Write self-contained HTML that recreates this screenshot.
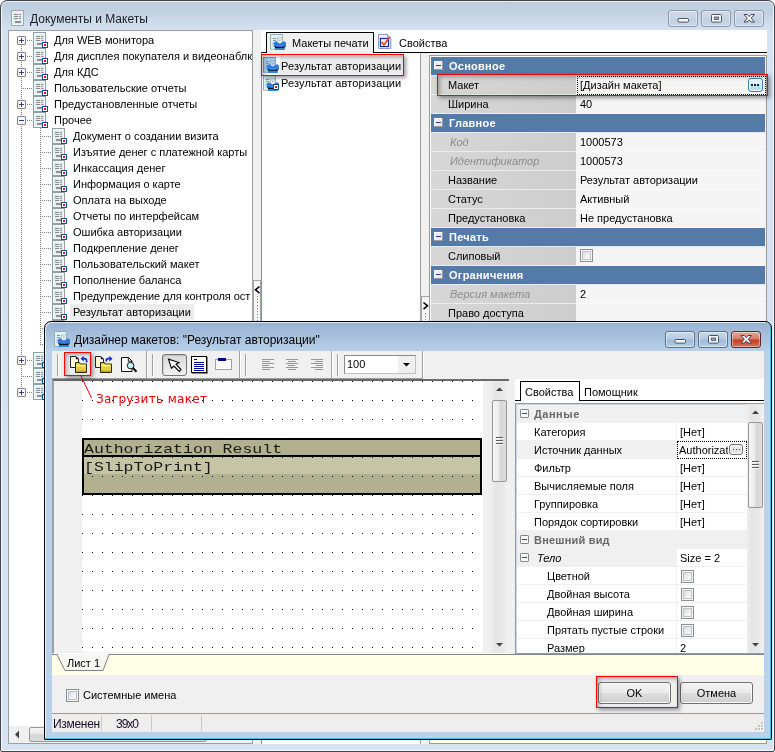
<!DOCTYPE html>
<html lang="ru"><head><meta charset="utf-8"><title>Документы и Макеты</title>
<style>
html,body{margin:0;padding:0;background:#fff;}
body{will-change:transform;width:775px;height:752px;position:relative;overflow:hidden;font:11px "Liberation Sans",sans-serif;color:#000;}
div{position:absolute;box-sizing:border-box;}
.t{white-space:nowrap;line-height:16px;height:16px;}
.tt{white-space:nowrap;line-height:16px;height:16px;font-size:12px;}
svg{position:absolute;overflow:visible;}
.rb{border:1px solid #f00;box-shadow:2px 2px 4px rgba(0,0,0,.4), inset 2px 2px 4px rgba(0,0,0,.3);}
.cb{width:13px;height:13px;border:1px solid #8e8f8f;background:linear-gradient(135deg,#cfd3d8 0%,#eef0f2 55%,#fff 100%);box-shadow:inset 0 0 0 1px #f4f4f4, inset 0 0 0 2px #bcc2c8;}
.btn{border:1px solid #707070;border-radius:3px;background:linear-gradient(#f2f2f2 0%,#ebebeb 48%,#dddddd 52%,#cfcfcf 100%);box-shadow:inset 0 0 0 1px #fcfcfc;text-align:center;line-height:20px;}
.cap{border:1px solid #8593a5;border-radius:3px;width:30px;height:17px;}
</style></head>
<body>
<div style="left:0px;top:0px;width:775px;height:752px;border:1px solid #41444a;border-radius:7px 7px 2px 2px;background:linear-gradient(180deg,#bccbdc 0px,#c4d3e4 12px,#d5e2f0 30px,#d7e3f1 100%);box-shadow:inset 0 0 0 1px rgba(255,255,255,.75);"></div>
<svg style="left:11px;top:10px" width="16" height="16" viewBox="0 0 16 16"><rect x="0" y="0" width="13" height="16" fill="#a6a6a6"/> <rect x="1" y="1" width="11" height="14" fill="#dffefe"/> <rect x="2" y="2" width="9" height="12" fill="#e6eef2"/> <rect x="3" y="4" width="4" height="1" fill="#858585"/><rect x="8" y="4" width="2" height="1" fill="#858585"/> <rect x="3" y="6" width="4" height="1" fill="#8e8e8e"/><rect x="8" y="6" width="2" height="1" fill="#8e8e8e"/> <rect x="3" y="8" width="4" height="1" fill="#8e8e8e"/><rect x="8" y="8" width="2" height="1" fill="#8e8e8e"/> <rect x="4" y="11" width="6" height="2" fill="#8f8f8f"/></svg>
<div class="tt" style="left:30px;top:11px;color:#1c1c24;">Документы и Макеты</div>
<div class="cap" style="left:668px;top:10px;width:30px;height:17px;background:linear-gradient(#cfdbea 0%,#c8d5e6 48%,#bfcee2 52%,#c8d6e8 100%);border-color:#8a99ad;box-shadow:inset 0 0 0 1px rgba(255,255,255,.45);"><svg style="left:-1px;top:-1px" width="30" height="17"><rect x="10" y="8.5" width="10.5" height="3.6" rx="1" fill="#f6f7f9" stroke="#4a5565"/></svg></div>
<div class="cap" style="left:701px;top:10px;width:30px;height:17px;background:linear-gradient(#cfdbea 0%,#c8d5e6 48%,#bfcee2 52%,#c8d6e8 100%);border-color:#8a99ad;box-shadow:inset 0 0 0 1px rgba(255,255,255,.45);"><svg style="left:-1px;top:-1px" width="30" height="17"><rect x="10.5" y="4.5" width="10" height="7.6" rx="1" fill="#f6f7f9" stroke="#4a5565"/><rect x="13.3" y="7" width="4.4" height="2.4" fill="#8fa3bd" stroke="#4a5565" stroke-width=".8"/></svg></div>
<div class="cap" style="left:734px;top:10px;width:30px;height:17px;background:linear-gradient(#cfdbea 0%,#c8d5e6 48%,#bfcee2 52%,#c8d6e8 100%);border-color:#8a99ad;box-shadow:inset 0 0 0 1px rgba(255,255,255,.45);"><svg style="left:-1px;top:-1px" width="30" height="17"><path d="M10 4.5 L13.3 4.5 L15.2 6.6 L17.1 4.5 L20.5 4.5 L17.2 8.2 L20.5 12 L17.1 12 L15.2 9.9 L13.3 12 L10 12 L13.3 8.2 Z" fill="#f8f8f8" stroke="#454552" stroke-width="1" stroke-linejoin="round"/></svg></div>
<div style="left:8px;top:30px;width:245px;height:714px;background:#fff;border:1px solid #9a9ea8;"></div>
<div style="left:21px;top:42px;width:1px;height:351px;background:repeating-linear-gradient(180deg,#808080 0 1px,transparent 1px 2px);"></div>
<div style="left:40px;top:128px;width:1px;height:217px;background:repeating-linear-gradient(180deg,#808080 0 1px,transparent 1px 2px);"></div>
<div style="left:23px;top:40px;width:10px;height:1px;background:repeating-linear-gradient(90deg,#808080 0 1px,transparent 1px 2px);"></div>
<svg style="left:17px;top:36px" width="9" height="9" viewBox="0 0 9 9"><rect x=".5" y=".5" width="8" height="8" rx=".6" fill="#f8f8f8" stroke="#848484"/> <rect x="2" y="4" width="5" height="1" fill="#2a3f9c"/><rect x="4" y="2" width="1" height="5" fill="#2a3f9c"/></svg>
<svg style="left:33px;top:32px" width="16" height="16" viewBox="0 0 16 16"><rect x="0" y="0" width="13" height="16" fill="#9d9d9d"/> <rect x="1" y="1" width="11" height="14" fill="#dffefe"/> <rect x="2" y="2" width="9" height="12" fill="#e6eef2"/> <rect x="3" y="4" width="4" height="1" fill="#858585"/><rect x="8" y="4" width="2" height="1" fill="#858585"/> <rect x="3" y="6" width="4" height="1" fill="#8e8e8e"/><rect x="8" y="6" width="2" height="1" fill="#8e8e8e"/> <rect x="3" y="8" width="4" height="1" fill="#8e8e8e"/><rect x="8" y="8" width="2" height="1" fill="#8e8e8e"/> <rect x="4" y="11" width="6" height="2" fill="#8f8f8f"/> <rect x="9" y="10" width="6" height="6" fill="#0f4c8a"/> <rect x="10" y="11" width="4" height="4" fill="#fff"/> <rect x="11" y="12" width="2" height="2" fill="#f5063c"/></svg>
<div class="t" style="left:54px;top:32px;width:198px;overflow:hidden;">Для WEB монитора</div>
<div style="left:23px;top:56px;width:10px;height:1px;background:repeating-linear-gradient(90deg,#808080 0 1px,transparent 1px 2px);"></div>
<svg style="left:17px;top:52px" width="9" height="9" viewBox="0 0 9 9"><rect x=".5" y=".5" width="8" height="8" rx=".6" fill="#f8f8f8" stroke="#848484"/> <rect x="2" y="4" width="5" height="1" fill="#2a3f9c"/><rect x="4" y="2" width="1" height="5" fill="#2a3f9c"/></svg>
<svg style="left:33px;top:48px" width="16" height="16" viewBox="0 0 16 16"><rect x="0" y="0" width="13" height="16" fill="#9d9d9d"/> <rect x="1" y="1" width="11" height="14" fill="#dffefe"/> <rect x="2" y="2" width="9" height="12" fill="#e6eef2"/> <rect x="3" y="4" width="4" height="1" fill="#858585"/><rect x="8" y="4" width="2" height="1" fill="#858585"/> <rect x="3" y="6" width="4" height="1" fill="#8e8e8e"/><rect x="8" y="6" width="2" height="1" fill="#8e8e8e"/> <rect x="3" y="8" width="4" height="1" fill="#8e8e8e"/><rect x="8" y="8" width="2" height="1" fill="#8e8e8e"/> <rect x="4" y="11" width="6" height="2" fill="#8f8f8f"/> <rect x="9" y="10" width="6" height="6" fill="#0f4c8a"/> <rect x="10" y="11" width="4" height="4" fill="#fff"/> <rect x="11" y="12" width="2" height="2" fill="#f5063c"/></svg>
<div class="t" style="left:54px;top:48px;width:198px;overflow:hidden;">Для дисплея покупателя и видеонаблк</div>
<div style="left:23px;top:72px;width:10px;height:1px;background:repeating-linear-gradient(90deg,#808080 0 1px,transparent 1px 2px);"></div>
<svg style="left:17px;top:68px" width="9" height="9" viewBox="0 0 9 9"><rect x=".5" y=".5" width="8" height="8" rx=".6" fill="#f8f8f8" stroke="#848484"/> <rect x="2" y="4" width="5" height="1" fill="#2a3f9c"/><rect x="4" y="2" width="1" height="5" fill="#2a3f9c"/></svg>
<svg style="left:33px;top:64px" width="16" height="16" viewBox="0 0 16 16"><rect x="0" y="0" width="13" height="16" fill="#9d9d9d"/> <rect x="1" y="1" width="11" height="14" fill="#dffefe"/> <rect x="2" y="2" width="9" height="12" fill="#e6eef2"/> <rect x="3" y="4" width="4" height="1" fill="#858585"/><rect x="8" y="4" width="2" height="1" fill="#858585"/> <rect x="3" y="6" width="4" height="1" fill="#8e8e8e"/><rect x="8" y="6" width="2" height="1" fill="#8e8e8e"/> <rect x="3" y="8" width="4" height="1" fill="#8e8e8e"/><rect x="8" y="8" width="2" height="1" fill="#8e8e8e"/> <rect x="4" y="11" width="6" height="2" fill="#8f8f8f"/> <rect x="9" y="10" width="6" height="6" fill="#0f4c8a"/> <rect x="10" y="11" width="4" height="4" fill="#fff"/> <rect x="11" y="12" width="2" height="2" fill="#f5063c"/></svg>
<div class="t" style="left:54px;top:64px;width:198px;overflow:hidden;">Для КДС</div>
<div style="left:23px;top:88px;width:10px;height:1px;background:repeating-linear-gradient(90deg,#808080 0 1px,transparent 1px 2px);"></div>
<svg style="left:33px;top:80px" width="16" height="16" viewBox="0 0 16 16"><rect x="0" y="0" width="13" height="16" fill="#9d9d9d"/> <rect x="1" y="1" width="11" height="14" fill="#dffefe"/> <rect x="2" y="2" width="9" height="12" fill="#e6eef2"/> <rect x="3" y="4" width="4" height="1" fill="#858585"/><rect x="8" y="4" width="2" height="1" fill="#858585"/> <rect x="3" y="6" width="4" height="1" fill="#8e8e8e"/><rect x="8" y="6" width="2" height="1" fill="#8e8e8e"/> <rect x="3" y="8" width="4" height="1" fill="#8e8e8e"/><rect x="8" y="8" width="2" height="1" fill="#8e8e8e"/> <rect x="4" y="11" width="6" height="2" fill="#8f8f8f"/> <rect x="9" y="10" width="6" height="6" fill="#0f4c8a"/> <rect x="10" y="11" width="4" height="4" fill="#fff"/> <rect x="11" y="12" width="2" height="2" fill="#f5063c"/></svg>
<div class="t" style="left:54px;top:80px;width:198px;overflow:hidden;">Пользовательские отчеты</div>
<div style="left:23px;top:104px;width:10px;height:1px;background:repeating-linear-gradient(90deg,#808080 0 1px,transparent 1px 2px);"></div>
<svg style="left:17px;top:100px" width="9" height="9" viewBox="0 0 9 9"><rect x=".5" y=".5" width="8" height="8" rx=".6" fill="#f8f8f8" stroke="#848484"/> <rect x="2" y="4" width="5" height="1" fill="#2a3f9c"/><rect x="4" y="2" width="1" height="5" fill="#2a3f9c"/></svg>
<svg style="left:33px;top:96px" width="16" height="16" viewBox="0 0 16 16"><rect x="0" y="0" width="13" height="16" fill="#9d9d9d"/> <rect x="1" y="1" width="11" height="14" fill="#dffefe"/> <rect x="2" y="2" width="9" height="12" fill="#e6eef2"/> <rect x="3" y="4" width="4" height="1" fill="#858585"/><rect x="8" y="4" width="2" height="1" fill="#858585"/> <rect x="3" y="6" width="4" height="1" fill="#8e8e8e"/><rect x="8" y="6" width="2" height="1" fill="#8e8e8e"/> <rect x="3" y="8" width="4" height="1" fill="#8e8e8e"/><rect x="8" y="8" width="2" height="1" fill="#8e8e8e"/> <rect x="4" y="11" width="6" height="2" fill="#8f8f8f"/> <rect x="9" y="10" width="6" height="6" fill="#0f4c8a"/> <rect x="10" y="11" width="4" height="4" fill="#fff"/> <rect x="11" y="12" width="2" height="2" fill="#f5063c"/></svg>
<div class="t" style="left:54px;top:96px;width:198px;overflow:hidden;">Предустановленные отчеты</div>
<div style="left:23px;top:120px;width:10px;height:1px;background:repeating-linear-gradient(90deg,#808080 0 1px,transparent 1px 2px);"></div>
<svg style="left:17px;top:116px" width="9" height="9" viewBox="0 0 9 9"><rect x=".5" y=".5" width="8" height="8" rx=".6" fill="#f8f8f8" stroke="#848484"/> <rect x="2" y="4" width="5" height="1" fill="#2a3f9c"/></svg>
<svg style="left:33px;top:112px" width="16" height="16" viewBox="0 0 16 16"><rect x="0" y="0" width="13" height="16" fill="#9d9d9d"/> <rect x="1" y="1" width="11" height="14" fill="#dffefe"/> <rect x="2" y="2" width="9" height="12" fill="#e6eef2"/> <rect x="3" y="4" width="4" height="1" fill="#858585"/><rect x="8" y="4" width="2" height="1" fill="#858585"/> <rect x="3" y="6" width="4" height="1" fill="#8e8e8e"/><rect x="8" y="6" width="2" height="1" fill="#8e8e8e"/> <rect x="3" y="8" width="4" height="1" fill="#8e8e8e"/><rect x="8" y="8" width="2" height="1" fill="#8e8e8e"/> <rect x="4" y="11" width="6" height="2" fill="#8f8f8f"/> <rect x="9" y="10" width="6" height="6" fill="#0f4c8a"/> <rect x="10" y="11" width="4" height="4" fill="#fff"/> <rect x="11" y="12" width="2" height="2" fill="#f5063c"/></svg>
<div class="t" style="left:54px;top:112px;width:198px;overflow:hidden;">Прочее</div>
<div style="left:42px;top:136px;width:10px;height:1px;background:repeating-linear-gradient(90deg,#808080 0 1px,transparent 1px 2px);"></div>
<svg style="left:52px;top:128px" width="16" height="16" viewBox="0 0 16 16"><rect x="0" y="0" width="13" height="16" fill="#9d9d9d"/> <rect x="1" y="1" width="11" height="14" fill="#dffefe"/> <rect x="2" y="2" width="9" height="12" fill="#e6eef2"/> <rect x="3" y="4" width="4" height="1" fill="#858585"/><rect x="8" y="4" width="2" height="1" fill="#858585"/> <rect x="3" y="6" width="4" height="1" fill="#8e8e8e"/><rect x="8" y="6" width="2" height="1" fill="#8e8e8e"/> <rect x="3" y="8" width="4" height="1" fill="#8e8e8e"/><rect x="8" y="8" width="2" height="1" fill="#8e8e8e"/> <rect x="4" y="11" width="6" height="2" fill="#8f8f8f"/> <rect x="9" y="10" width="6" height="6" fill="#0f4c8a"/> <rect x="10" y="11" width="4" height="4" fill="#fff"/> <rect x="11" y="12" width="2" height="2" fill="#f5063c"/></svg>
<div class="t" style="left:73px;top:128px;width:179px;overflow:hidden;">Документ о создании визита</div>
<div style="left:42px;top:152px;width:10px;height:1px;background:repeating-linear-gradient(90deg,#808080 0 1px,transparent 1px 2px);"></div>
<svg style="left:52px;top:144px" width="16" height="16" viewBox="0 0 16 16"><rect x="0" y="0" width="13" height="16" fill="#9d9d9d"/> <rect x="1" y="1" width="11" height="14" fill="#dffefe"/> <rect x="2" y="2" width="9" height="12" fill="#e6eef2"/> <rect x="3" y="4" width="4" height="1" fill="#858585"/><rect x="8" y="4" width="2" height="1" fill="#858585"/> <rect x="3" y="6" width="4" height="1" fill="#8e8e8e"/><rect x="8" y="6" width="2" height="1" fill="#8e8e8e"/> <rect x="3" y="8" width="4" height="1" fill="#8e8e8e"/><rect x="8" y="8" width="2" height="1" fill="#8e8e8e"/> <rect x="4" y="11" width="6" height="2" fill="#8f8f8f"/> <rect x="9" y="10" width="6" height="6" fill="#0f4c8a"/> <rect x="10" y="11" width="4" height="4" fill="#fff"/> <rect x="11" y="12" width="2" height="2" fill="#f5063c"/></svg>
<div class="t" style="left:73px;top:144px;width:179px;overflow:hidden;">Изъятие денег с платежной карты</div>
<div style="left:42px;top:168px;width:10px;height:1px;background:repeating-linear-gradient(90deg,#808080 0 1px,transparent 1px 2px);"></div>
<svg style="left:52px;top:160px" width="16" height="16" viewBox="0 0 16 16"><rect x="0" y="0" width="13" height="16" fill="#9d9d9d"/> <rect x="1" y="1" width="11" height="14" fill="#dffefe"/> <rect x="2" y="2" width="9" height="12" fill="#e6eef2"/> <rect x="3" y="4" width="4" height="1" fill="#858585"/><rect x="8" y="4" width="2" height="1" fill="#858585"/> <rect x="3" y="6" width="4" height="1" fill="#8e8e8e"/><rect x="8" y="6" width="2" height="1" fill="#8e8e8e"/> <rect x="3" y="8" width="4" height="1" fill="#8e8e8e"/><rect x="8" y="8" width="2" height="1" fill="#8e8e8e"/> <rect x="4" y="11" width="6" height="2" fill="#8f8f8f"/> <rect x="9" y="10" width="6" height="6" fill="#0f4c8a"/> <rect x="10" y="11" width="4" height="4" fill="#fff"/> <rect x="11" y="12" width="2" height="2" fill="#f5063c"/></svg>
<div class="t" style="left:73px;top:160px;width:179px;overflow:hidden;">Инкассация денег</div>
<div style="left:42px;top:184px;width:10px;height:1px;background:repeating-linear-gradient(90deg,#808080 0 1px,transparent 1px 2px);"></div>
<svg style="left:52px;top:176px" width="16" height="16" viewBox="0 0 16 16"><rect x="0" y="0" width="13" height="16" fill="#9d9d9d"/> <rect x="1" y="1" width="11" height="14" fill="#dffefe"/> <rect x="2" y="2" width="9" height="12" fill="#e6eef2"/> <rect x="3" y="4" width="4" height="1" fill="#858585"/><rect x="8" y="4" width="2" height="1" fill="#858585"/> <rect x="3" y="6" width="4" height="1" fill="#8e8e8e"/><rect x="8" y="6" width="2" height="1" fill="#8e8e8e"/> <rect x="3" y="8" width="4" height="1" fill="#8e8e8e"/><rect x="8" y="8" width="2" height="1" fill="#8e8e8e"/> <rect x="4" y="11" width="6" height="2" fill="#8f8f8f"/> <rect x="9" y="10" width="6" height="6" fill="#0f4c8a"/> <rect x="10" y="11" width="4" height="4" fill="#fff"/> <rect x="11" y="12" width="2" height="2" fill="#f5063c"/></svg>
<div class="t" style="left:73px;top:176px;width:179px;overflow:hidden;">Информация о карте</div>
<div style="left:42px;top:200px;width:10px;height:1px;background:repeating-linear-gradient(90deg,#808080 0 1px,transparent 1px 2px);"></div>
<svg style="left:52px;top:192px" width="16" height="16" viewBox="0 0 16 16"><rect x="0" y="0" width="13" height="16" fill="#9d9d9d"/> <rect x="1" y="1" width="11" height="14" fill="#dffefe"/> <rect x="2" y="2" width="9" height="12" fill="#e6eef2"/> <rect x="3" y="4" width="4" height="1" fill="#858585"/><rect x="8" y="4" width="2" height="1" fill="#858585"/> <rect x="3" y="6" width="4" height="1" fill="#8e8e8e"/><rect x="8" y="6" width="2" height="1" fill="#8e8e8e"/> <rect x="3" y="8" width="4" height="1" fill="#8e8e8e"/><rect x="8" y="8" width="2" height="1" fill="#8e8e8e"/> <rect x="4" y="11" width="6" height="2" fill="#8f8f8f"/> <rect x="9" y="10" width="6" height="6" fill="#0f4c8a"/> <rect x="10" y="11" width="4" height="4" fill="#fff"/> <rect x="11" y="12" width="2" height="2" fill="#f5063c"/></svg>
<div class="t" style="left:73px;top:192px;width:179px;overflow:hidden;">Оплата на выходе</div>
<div style="left:42px;top:216px;width:10px;height:1px;background:repeating-linear-gradient(90deg,#808080 0 1px,transparent 1px 2px);"></div>
<svg style="left:52px;top:208px" width="16" height="16" viewBox="0 0 16 16"><rect x="0" y="0" width="13" height="16" fill="#9d9d9d"/> <rect x="1" y="1" width="11" height="14" fill="#dffefe"/> <rect x="2" y="2" width="9" height="12" fill="#e6eef2"/> <rect x="3" y="4" width="4" height="1" fill="#858585"/><rect x="8" y="4" width="2" height="1" fill="#858585"/> <rect x="3" y="6" width="4" height="1" fill="#8e8e8e"/><rect x="8" y="6" width="2" height="1" fill="#8e8e8e"/> <rect x="3" y="8" width="4" height="1" fill="#8e8e8e"/><rect x="8" y="8" width="2" height="1" fill="#8e8e8e"/> <rect x="4" y="11" width="6" height="2" fill="#8f8f8f"/> <rect x="9" y="10" width="6" height="6" fill="#0f4c8a"/> <rect x="10" y="11" width="4" height="4" fill="#fff"/> <rect x="11" y="12" width="2" height="2" fill="#f5063c"/></svg>
<div class="t" style="left:73px;top:208px;width:179px;overflow:hidden;">Отчеты по интерфейсам</div>
<div style="left:42px;top:232px;width:10px;height:1px;background:repeating-linear-gradient(90deg,#808080 0 1px,transparent 1px 2px);"></div>
<svg style="left:52px;top:224px" width="16" height="16" viewBox="0 0 16 16"><rect x="0" y="0" width="13" height="16" fill="#9d9d9d"/> <rect x="1" y="1" width="11" height="14" fill="#dffefe"/> <rect x="2" y="2" width="9" height="12" fill="#e6eef2"/> <rect x="3" y="4" width="4" height="1" fill="#858585"/><rect x="8" y="4" width="2" height="1" fill="#858585"/> <rect x="3" y="6" width="4" height="1" fill="#8e8e8e"/><rect x="8" y="6" width="2" height="1" fill="#8e8e8e"/> <rect x="3" y="8" width="4" height="1" fill="#8e8e8e"/><rect x="8" y="8" width="2" height="1" fill="#8e8e8e"/> <rect x="4" y="11" width="6" height="2" fill="#8f8f8f"/> <rect x="9" y="10" width="6" height="6" fill="#0f4c8a"/> <rect x="10" y="11" width="4" height="4" fill="#fff"/> <rect x="11" y="12" width="2" height="2" fill="#f5063c"/></svg>
<div class="t" style="left:73px;top:224px;width:179px;overflow:hidden;">Ошибка авторизации</div>
<div style="left:42px;top:248px;width:10px;height:1px;background:repeating-linear-gradient(90deg,#808080 0 1px,transparent 1px 2px);"></div>
<svg style="left:52px;top:240px" width="16" height="16" viewBox="0 0 16 16"><rect x="0" y="0" width="13" height="16" fill="#9d9d9d"/> <rect x="1" y="1" width="11" height="14" fill="#dffefe"/> <rect x="2" y="2" width="9" height="12" fill="#e6eef2"/> <rect x="3" y="4" width="4" height="1" fill="#858585"/><rect x="8" y="4" width="2" height="1" fill="#858585"/> <rect x="3" y="6" width="4" height="1" fill="#8e8e8e"/><rect x="8" y="6" width="2" height="1" fill="#8e8e8e"/> <rect x="3" y="8" width="4" height="1" fill="#8e8e8e"/><rect x="8" y="8" width="2" height="1" fill="#8e8e8e"/> <rect x="4" y="11" width="6" height="2" fill="#8f8f8f"/> <rect x="9" y="10" width="6" height="6" fill="#0f4c8a"/> <rect x="10" y="11" width="4" height="4" fill="#fff"/> <rect x="11" y="12" width="2" height="2" fill="#f5063c"/></svg>
<div class="t" style="left:73px;top:240px;width:179px;overflow:hidden;">Подкрепление денег</div>
<div style="left:42px;top:264px;width:10px;height:1px;background:repeating-linear-gradient(90deg,#808080 0 1px,transparent 1px 2px);"></div>
<svg style="left:52px;top:256px" width="16" height="16" viewBox="0 0 16 16"><rect x="0" y="0" width="13" height="16" fill="#9d9d9d"/> <rect x="1" y="1" width="11" height="14" fill="#dffefe"/> <rect x="2" y="2" width="9" height="12" fill="#e6eef2"/> <rect x="3" y="4" width="4" height="1" fill="#858585"/><rect x="8" y="4" width="2" height="1" fill="#858585"/> <rect x="3" y="6" width="4" height="1" fill="#8e8e8e"/><rect x="8" y="6" width="2" height="1" fill="#8e8e8e"/> <rect x="3" y="8" width="4" height="1" fill="#8e8e8e"/><rect x="8" y="8" width="2" height="1" fill="#8e8e8e"/> <rect x="4" y="11" width="6" height="2" fill="#8f8f8f"/> <rect x="9" y="10" width="6" height="6" fill="#0f4c8a"/> <rect x="10" y="11" width="4" height="4" fill="#fff"/> <rect x="11" y="12" width="2" height="2" fill="#f5063c"/></svg>
<div class="t" style="left:73px;top:256px;width:179px;overflow:hidden;">Пользовательский макет</div>
<div style="left:42px;top:280px;width:10px;height:1px;background:repeating-linear-gradient(90deg,#808080 0 1px,transparent 1px 2px);"></div>
<svg style="left:52px;top:272px" width="16" height="16" viewBox="0 0 16 16"><rect x="0" y="0" width="13" height="16" fill="#9d9d9d"/> <rect x="1" y="1" width="11" height="14" fill="#dffefe"/> <rect x="2" y="2" width="9" height="12" fill="#e6eef2"/> <rect x="3" y="4" width="4" height="1" fill="#858585"/><rect x="8" y="4" width="2" height="1" fill="#858585"/> <rect x="3" y="6" width="4" height="1" fill="#8e8e8e"/><rect x="8" y="6" width="2" height="1" fill="#8e8e8e"/> <rect x="3" y="8" width="4" height="1" fill="#8e8e8e"/><rect x="8" y="8" width="2" height="1" fill="#8e8e8e"/> <rect x="4" y="11" width="6" height="2" fill="#8f8f8f"/> <rect x="9" y="10" width="6" height="6" fill="#0f4c8a"/> <rect x="10" y="11" width="4" height="4" fill="#fff"/> <rect x="11" y="12" width="2" height="2" fill="#f5063c"/></svg>
<div class="t" style="left:73px;top:272px;width:179px;overflow:hidden;">Пополнение баланса</div>
<div style="left:42px;top:296px;width:10px;height:1px;background:repeating-linear-gradient(90deg,#808080 0 1px,transparent 1px 2px);"></div>
<svg style="left:52px;top:288px" width="16" height="16" viewBox="0 0 16 16"><rect x="0" y="0" width="13" height="16" fill="#9d9d9d"/> <rect x="1" y="1" width="11" height="14" fill="#dffefe"/> <rect x="2" y="2" width="9" height="12" fill="#e6eef2"/> <rect x="3" y="4" width="4" height="1" fill="#858585"/><rect x="8" y="4" width="2" height="1" fill="#858585"/> <rect x="3" y="6" width="4" height="1" fill="#8e8e8e"/><rect x="8" y="6" width="2" height="1" fill="#8e8e8e"/> <rect x="3" y="8" width="4" height="1" fill="#8e8e8e"/><rect x="8" y="8" width="2" height="1" fill="#8e8e8e"/> <rect x="4" y="11" width="6" height="2" fill="#8f8f8f"/> <rect x="9" y="10" width="6" height="6" fill="#0f4c8a"/> <rect x="10" y="11" width="4" height="4" fill="#fff"/> <rect x="11" y="12" width="2" height="2" fill="#f5063c"/></svg>
<div class="t" style="left:73px;top:288px;width:179px;overflow:hidden;letter-spacing:-.07px;">Предупреждение для контроля ост</div>
<div style="left:42px;top:312px;width:10px;height:1px;background:repeating-linear-gradient(90deg,#808080 0 1px,transparent 1px 2px);"></div>
<svg style="left:52px;top:304px" width="16" height="16" viewBox="0 0 16 16"><rect x="0" y="0" width="13" height="16" fill="#9d9d9d"/> <rect x="1" y="1" width="11" height="14" fill="#dffefe"/> <rect x="2" y="2" width="9" height="12" fill="#e6eef2"/> <rect x="3" y="4" width="4" height="1" fill="#858585"/><rect x="8" y="4" width="2" height="1" fill="#858585"/> <rect x="3" y="6" width="4" height="1" fill="#8e8e8e"/><rect x="8" y="6" width="2" height="1" fill="#8e8e8e"/> <rect x="3" y="8" width="4" height="1" fill="#8e8e8e"/><rect x="8" y="8" width="2" height="1" fill="#8e8e8e"/> <rect x="4" y="11" width="6" height="2" fill="#8f8f8f"/> <rect x="9" y="10" width="6" height="6" fill="#0f4c8a"/> <rect x="10" y="11" width="4" height="4" fill="#fff"/> <rect x="11" y="12" width="2" height="2" fill="#f5063c"/></svg>
<div style="left:70px;top:304px;width:124px;height:16px;background:#ececec;"></div>
<div class="t" style="left:73px;top:304px;width:179px;overflow:hidden;">Результат авторизации</div>
<div style="left:42px;top:328px;width:10px;height:1px;background:repeating-linear-gradient(90deg,#808080 0 1px,transparent 1px 2px);"></div>
<svg style="left:52px;top:320px" width="16" height="16" viewBox="0 0 16 16"><rect x="0" y="0" width="13" height="16" fill="#9d9d9d"/> <rect x="1" y="1" width="11" height="14" fill="#dffefe"/> <rect x="2" y="2" width="9" height="12" fill="#e6eef2"/> <rect x="3" y="4" width="4" height="1" fill="#858585"/><rect x="8" y="4" width="2" height="1" fill="#858585"/> <rect x="3" y="6" width="4" height="1" fill="#8e8e8e"/><rect x="8" y="6" width="2" height="1" fill="#8e8e8e"/> <rect x="3" y="8" width="4" height="1" fill="#8e8e8e"/><rect x="8" y="8" width="2" height="1" fill="#8e8e8e"/> <rect x="4" y="11" width="6" height="2" fill="#8f8f8f"/> <rect x="9" y="10" width="6" height="6" fill="#0f4c8a"/> <rect x="10" y="11" width="4" height="4" fill="#fff"/> <rect x="11" y="12" width="2" height="2" fill="#f5063c"/></svg>
<div style="left:42px;top:344px;width:10px;height:1px;background:repeating-linear-gradient(90deg,#808080 0 1px,transparent 1px 2px);"></div>
<svg style="left:52px;top:336px" width="16" height="16" viewBox="0 0 16 16"><rect x="0" y="0" width="13" height="16" fill="#9d9d9d"/> <rect x="1" y="1" width="11" height="14" fill="#dffefe"/> <rect x="2" y="2" width="9" height="12" fill="#e6eef2"/> <rect x="3" y="4" width="4" height="1" fill="#858585"/><rect x="8" y="4" width="2" height="1" fill="#858585"/> <rect x="3" y="6" width="4" height="1" fill="#8e8e8e"/><rect x="8" y="6" width="2" height="1" fill="#8e8e8e"/> <rect x="3" y="8" width="4" height="1" fill="#8e8e8e"/><rect x="8" y="8" width="2" height="1" fill="#8e8e8e"/> <rect x="4" y="11" width="6" height="2" fill="#8f8f8f"/> <rect x="9" y="10" width="6" height="6" fill="#0f4c8a"/> <rect x="10" y="11" width="4" height="4" fill="#fff"/> <rect x="11" y="12" width="2" height="2" fill="#f5063c"/></svg>
<div style="left:23px;top:360px;width:10px;height:1px;background:repeating-linear-gradient(90deg,#808080 0 1px,transparent 1px 2px);"></div>
<svg style="left:17px;top:356px" width="9" height="9" viewBox="0 0 9 9"><rect x=".5" y=".5" width="8" height="8" rx=".6" fill="#f8f8f8" stroke="#848484"/> <rect x="2" y="4" width="5" height="1" fill="#2a3f9c"/><rect x="4" y="2" width="1" height="5" fill="#2a3f9c"/></svg>
<svg style="left:33px;top:352px" width="16" height="16" viewBox="0 0 16 16"><rect x="0" y="0" width="13" height="16" fill="#9d9d9d"/> <rect x="1" y="1" width="11" height="14" fill="#dffefe"/> <rect x="2" y="2" width="9" height="12" fill="#e6eef2"/> <rect x="3" y="4" width="4" height="1" fill="#858585"/><rect x="8" y="4" width="2" height="1" fill="#858585"/> <rect x="3" y="6" width="4" height="1" fill="#8e8e8e"/><rect x="8" y="6" width="2" height="1" fill="#8e8e8e"/> <rect x="3" y="8" width="4" height="1" fill="#8e8e8e"/><rect x="8" y="8" width="2" height="1" fill="#8e8e8e"/> <rect x="4" y="11" width="6" height="2" fill="#8f8f8f"/> <rect x="9" y="10" width="6" height="6" fill="#0f4c8a"/> <rect x="10" y="11" width="4" height="4" fill="#fff"/> <rect x="11" y="12" width="2" height="2" fill="#f5063c"/></svg>
<div style="left:23px;top:376px;width:10px;height:1px;background:repeating-linear-gradient(90deg,#808080 0 1px,transparent 1px 2px);"></div>
<svg style="left:33px;top:368px" width="16" height="16" viewBox="0 0 16 16"><rect x="0" y="0" width="13" height="16" fill="#9d9d9d"/> <rect x="1" y="1" width="11" height="14" fill="#dffefe"/> <rect x="2" y="2" width="9" height="12" fill="#e6eef2"/> <rect x="3" y="4" width="4" height="1" fill="#858585"/><rect x="8" y="4" width="2" height="1" fill="#858585"/> <rect x="3" y="6" width="4" height="1" fill="#8e8e8e"/><rect x="8" y="6" width="2" height="1" fill="#8e8e8e"/> <rect x="3" y="8" width="4" height="1" fill="#8e8e8e"/><rect x="8" y="8" width="2" height="1" fill="#8e8e8e"/> <rect x="4" y="11" width="6" height="2" fill="#8f8f8f"/> <rect x="9" y="10" width="6" height="6" fill="#0f4c8a"/> <rect x="10" y="11" width="4" height="4" fill="#fff"/> <rect x="11" y="12" width="2" height="2" fill="#f5063c"/></svg>
<div style="left:23px;top:392px;width:10px;height:1px;background:repeating-linear-gradient(90deg,#808080 0 1px,transparent 1px 2px);"></div>
<svg style="left:17px;top:388px" width="9" height="9" viewBox="0 0 9 9"><rect x=".5" y=".5" width="8" height="8" rx=".6" fill="#f8f8f8" stroke="#848484"/> <rect x="2" y="4" width="5" height="1" fill="#2a3f9c"/><rect x="4" y="2" width="1" height="5" fill="#2a3f9c"/></svg>
<svg style="left:33px;top:384px" width="16" height="16" viewBox="0 0 16 16"><rect x="0" y="0" width="13" height="16" fill="#9d9d9d"/> <rect x="1" y="1" width="11" height="14" fill="#dffefe"/> <rect x="2" y="2" width="9" height="12" fill="#e6eef2"/> <rect x="3" y="4" width="4" height="1" fill="#858585"/><rect x="8" y="4" width="2" height="1" fill="#858585"/> <rect x="3" y="6" width="4" height="1" fill="#8e8e8e"/><rect x="8" y="6" width="2" height="1" fill="#8e8e8e"/> <rect x="3" y="8" width="4" height="1" fill="#8e8e8e"/><rect x="8" y="8" width="2" height="1" fill="#8e8e8e"/> <rect x="4" y="11" width="6" height="2" fill="#8f8f8f"/> <rect x="9" y="10" width="6" height="6" fill="#0f4c8a"/> <rect x="10" y="11" width="4" height="4" fill="#fff"/> <rect x="11" y="12" width="2" height="2" fill="#f5063c"/></svg>
<div style="left:9px;top:726px;width:243px;height:17px;background:#f0f0f0;"></div>
<div style="left:9px;top:726px;width:17px;height:17px;"><svg width="17" height="17"><path d="M10 4.5 L6 8.5 L10 12.5Z" fill="#404040"/></svg></div>
<div style="left:29px;top:727px;width:178px;height:15px;border:1px solid #989898;border-radius:2px;background:linear-gradient(#f4f4f4 0%,#e9e9e9 45%,#d4d4d4 55%,#dcdcdc 100%);"></div>
<div style="left:253px;top:30px;width:8px;height:714px;background:#f0f0f0;"></div>
<div style="left:252px;top:280px;width:10px;height:200px;background:#f6f6f6;border:1px solid #a4a4a4;border-left-width:2px;border-right-width:2px;"></div>
<svg style="left:254px;top:285px" width="7" height="10"><path d="M5.5 1.5 L1.5 4.8 L5.5 8.2" fill="none" stroke="#000" stroke-width="1.6"/></svg>
<div style="left:257px;top:296px;width:1px;height:26px;background:repeating-linear-gradient(180deg,#3c8cff 0 1px,transparent 1px 3px);"></div>
<div style="left:261px;top:30px;width:506px;height:714px;background:#fff;"></div>
<div style="left:261px;top:52px;width:506px;height:692px;background:#f0f0f0;border-top:1px solid #000;border-left:1px solid #8c8e94;border-bottom:1px solid #8c8e94;"></div>
<div style="left:266px;top:32px;width:108px;height:21px;background:#f0f0f0;border:1px solid #000;border-bottom:none;border-right:1px solid #000;"></div>
<svg style="left:270px;top:34px" width="16" height="16" viewBox="0 0 16 16"><rect x="0" y="0" width="12.8" height="15.6" fill="#9fa7a9"/> <rect x="1" y="1" width="11" height="13.8" fill="#d9f6f8"/> <rect x="3" y="4" width="3" height="1" fill="#8a8a8a"/><rect x="7" y="4" width="2" height="1" fill="#8a8a8a"/> <rect x="3" y="6" width="3" height="1" fill="#9a9a9a"/> <rect x="2.5" y="7.5" width="1" height="5" fill="#b8c4c8"/> <path d="M5 14.2 H14.6 L15 16 H4.6Z" fill="#2a8ce4"/> <path d="M5.6 7.4 H14.2 Q16 7.4 16 9.4 V11.4 Q16 13.4 14.2 13.4 H5.6 Q3.8 13.4 3.8 11.4 V9.4 Q3.8 7.4 5.6 7.4Z" fill="#1c6cd4"/> <path d="M4 10.2 Q10 11.6 15.8 10.2 V11 Q10 12.4 4 11Z" fill="#56a2f0"/> <path d="M5.6 7.7 H14.2 Q15.4 7.7 15.6 9 Q10 9.9 4.2 9 Q4.4 7.7 5.6 7.7Z" fill="#3a8ae6"/> <path d="M7.6 4 H12 L12.4 8 L9.8 9.8 L7.2 8Z" fill="#f6f9fc" stroke="#8fa0b4" stroke-width=".6"/> <path d="M8.2 5.4 L11.4 5.4 L9.8 8.2Z" fill="#b9c8d8"/> <path d="M5 12.5 Q9.8 13.6 14.6 12.5 V14.3 H5Z" fill="#070c18"/></svg>
<div class="t" style="left:292px;top:35px;">Макеты печати</div>
<svg style="left:378px;top:34px" width="14" height="15"><path d="M.5 .5 H9.5 L12.5 3.5 V14.5 H.5Z" fill="#eef3ff" stroke="#8a96c8"/><path d="M9.5 .5 V3.5 H12.5" fill="#cfd8f4" stroke="#8a96c8" stroke-width=".8"/><rect x="12.5" y="4" width="1" height="11" fill="#b8c0d8"/><rect x="2.5" y="4.5" width="8" height="8" fill="#fff" stroke="#1428a8" stroke-width="1.2"/><path d="M3.6 8 L6 10.8 L11.8 2.8" fill="none" stroke="#f04818" stroke-width="1.7"/></svg>
<div class="t" style="left:399px;top:35px;">Свойства</div>
<div style="left:262px;top:53px;width:158px;height:691px;background:#fff;"></div>
<div style="left:420px;top:53px;width:9px;height:691px;background:#f0f0f0;border-left:1px solid #a0a0a0;"></div>
<div style="left:280px;top:56px;width:123px;height:18px;background:#ececec;"></div>
<svg style="left:263px;top:57px" width="16" height="16" viewBox="0 0 16 16"><rect x="0" y="0" width="12.8" height="15.6" fill="#9fa7a9"/> <rect x="1" y="1" width="11" height="13.8" fill="#d9f6f8"/> <rect x="3" y="4" width="3" height="1" fill="#8a8a8a"/><rect x="7" y="4" width="2" height="1" fill="#8a8a8a"/> <rect x="3" y="6" width="3" height="1" fill="#9a9a9a"/> <rect x="2.5" y="7.5" width="1" height="5" fill="#b8c4c8"/> <path d="M5 14.2 H14.6 L15 16 H4.6Z" fill="#2a8ce4"/> <path d="M5.6 7.4 H14.2 Q16 7.4 16 9.4 V11.4 Q16 13.4 14.2 13.4 H5.6 Q3.8 13.4 3.8 11.4 V9.4 Q3.8 7.4 5.6 7.4Z" fill="#1c6cd4"/> <path d="M4 10.2 Q10 11.6 15.8 10.2 V11 Q10 12.4 4 11Z" fill="#56a2f0"/> <path d="M5.6 7.7 H14.2 Q15.4 7.7 15.6 9 Q10 9.9 4.2 9 Q4.4 7.7 5.6 7.7Z" fill="#3a8ae6"/> <path d="M7.6 4 H12 L12.4 8 L9.8 9.8 L7.2 8Z" fill="#f6f9fc" stroke="#8fa0b4" stroke-width=".6"/> <path d="M8.2 5.4 L11.4 5.4 L9.8 8.2Z" fill="#b9c8d8"/> <path d="M5 12.5 Q9.8 13.6 14.6 12.5 V14.3 H5Z" fill="#070c18"/></svg>
<div style="left:263px;top:57px;width:13px;height:16px;background:rgba(60,130,230,.3);"></div>
<div class="t" style="left:281px;top:58px;letter-spacing:.12px;">Результат авторизации</div>
<svg style="left:263px;top:75px" width="16" height="16" viewBox="0 0 16 16"><rect x="0" y="0" width="12.8" height="15.6" fill="#9fa7a9"/> <rect x="1" y="1" width="11" height="13.8" fill="#d9f6f8"/> <rect x="3" y="4" width="3" height="1" fill="#8a8a8a"/><rect x="7" y="4" width="2" height="1" fill="#8a8a8a"/> <rect x="3" y="6" width="3" height="1" fill="#9a9a9a"/> <rect x="2.5" y="7.5" width="1" height="5" fill="#b8c4c8"/> <path d="M5 14.2 H14.6 L15 16 H4.6Z" fill="#2a8ce4"/> <path d="M5.6 7.4 H14.2 Q16 7.4 16 9.4 V11.4 Q16 13.4 14.2 13.4 H5.6 Q3.8 13.4 3.8 11.4 V9.4 Q3.8 7.4 5.6 7.4Z" fill="#1c6cd4"/> <path d="M4 10.2 Q10 11.6 15.8 10.2 V11 Q10 12.4 4 11Z" fill="#56a2f0"/> <path d="M5.6 7.7 H14.2 Q15.4 7.7 15.6 9 Q10 9.9 4.2 9 Q4.4 7.7 5.6 7.7Z" fill="#3a8ae6"/> <path d="M7.6 4 H12 L12.4 8 L9.8 9.8 L7.2 8Z" fill="#f6f9fc" stroke="#8fa0b4" stroke-width=".6"/> <path d="M8.2 5.4 L11.4 5.4 L9.8 8.2Z" fill="#b9c8d8"/> <path d="M5 12.5 Q9.8 13.6 14.6 12.5 V14.3 H5Z" fill="#070c18"/> <rect x="10" y="9" width="6" height="6" fill="#0f4c8a"/> <rect x="11" y="10" width="4" height="4" fill="#fff"/> <rect x="12" y="11" width="2" height="2" fill="#f5063c"/></svg>
<div class="t" style="left:281px;top:75px;letter-spacing:.12px;">Результат авторизации</div>
<div class="rb" style="left:261px;top:54px;width:143px;height:22px;"></div>
<div style="left:420px;top:296px;width:10px;height:200px;background:#f6f6f6;border:1px solid #a4a4a4;border-left-width:2px;border-right-width:1px;"></div>
<svg style="left:422px;top:301px" width="7" height="10"><path d="M1.5 1.5 L5.5 4.8 L1.5 8.2" fill="none" stroke="#000" stroke-width="1.6"/></svg>
<div style="left:425px;top:313px;width:1px;height:9px;background:repeating-linear-gradient(180deg,#3c8cff 0 1px,transparent 1px 3px);"></div>
<div style="left:429px;top:55px;width:338px;height:689px;background:#f0f0f0;border:1px solid #9a9a9a;box-shadow:inset 1px 1px 0 #fcfcfc;"></div>
<div style="left:431px;top:57px;width:334px;height:19px;background:#547aa8;border-bottom:1px solid #e6eaf0;"></div>
<svg style="left:434px;top:61px" width="9" height="9"><rect x="0" y="0" width="9" height="9" fill="#9c9c9c"/><rect x="0" y="0" width="8" height="8" fill="#fafafa"/><rect x="1" y="1" width="7" height="7" fill="#ececec"/><rect x="2" y="4" width="5" height="1" fill="#2a3a9c"/></svg>
<div class="t" style="left:449px;top:58px;color:#fff;font-weight:bold;letter-spacing:.25px;">Основное</div>
<div style="left:431px;top:76px;width:145px;height:19px;background:linear-gradient(90deg,#d7d7d7,#cdcdcd);border-bottom:1px solid #ececec;"></div>
<div style="left:576px;top:76px;width:189px;height:19px;background:#f5f5f5;border-bottom:1px solid #fbfbfb;"></div>
<div class="t" style="left:448px;top:77px;">Макет</div>
<div class="t" style="left:580px;top:77px;">[Дизайн макета]</div>
<div style="left:431px;top:95px;width:145px;height:19px;background:linear-gradient(90deg,#d7d7d7,#cdcdcd);border-bottom:1px solid #ececec;"></div>
<div style="left:576px;top:95px;width:189px;height:19px;background:#f5f5f5;border-bottom:1px solid #fbfbfb;"></div>
<div class="t" style="left:448px;top:96px;">Ширина</div>
<div class="t" style="left:580px;top:96px;">40</div>
<div style="left:431px;top:114px;width:334px;height:19px;background:#547aa8;border-bottom:1px solid #e6eaf0;"></div>
<svg style="left:434px;top:118px" width="9" height="9"><rect x="0" y="0" width="9" height="9" fill="#9c9c9c"/><rect x="0" y="0" width="8" height="8" fill="#fafafa"/><rect x="1" y="1" width="7" height="7" fill="#ececec"/><rect x="2" y="4" width="5" height="1" fill="#2a3a9c"/></svg>
<div class="t" style="left:449px;top:115px;color:#fff;font-weight:bold;letter-spacing:.25px;">Главное</div>
<div style="left:431px;top:133px;width:145px;height:19px;background:linear-gradient(90deg,#d7d7d7,#cdcdcd);border-bottom:1px solid #ececec;"></div>
<div style="left:576px;top:133px;width:189px;height:19px;background:#f5f5f5;border-bottom:1px solid #fbfbfb;"></div>
<div class="t" style="left:450px;top:134px;color:#8c8c8c;font-style:italic;">Код</div>
<div class="t" style="left:580px;top:134px;">1000573</div>
<div style="left:431px;top:152px;width:145px;height:19px;background:linear-gradient(90deg,#d7d7d7,#cdcdcd);border-bottom:1px solid #ececec;"></div>
<div style="left:576px;top:152px;width:189px;height:19px;background:#f5f5f5;border-bottom:1px solid #fbfbfb;"></div>
<div class="t" style="left:450px;top:153px;color:#8c8c8c;font-style:italic;">Идентификатор</div>
<div class="t" style="left:580px;top:153px;">1000573</div>
<div style="left:431px;top:171px;width:145px;height:19px;background:linear-gradient(90deg,#d7d7d7,#cdcdcd);border-bottom:1px solid #ececec;"></div>
<div style="left:576px;top:171px;width:189px;height:19px;background:#f5f5f5;border-bottom:1px solid #fbfbfb;"></div>
<div class="t" style="left:448px;top:172px;">Название</div>
<div class="t" style="left:580px;top:172px;">Результат авторизации</div>
<div style="left:431px;top:190px;width:145px;height:19px;background:linear-gradient(90deg,#d7d7d7,#cdcdcd);border-bottom:1px solid #ececec;"></div>
<div style="left:576px;top:190px;width:189px;height:19px;background:#f5f5f5;border-bottom:1px solid #fbfbfb;"></div>
<div class="t" style="left:448px;top:191px;">Статус</div>
<div class="t" style="left:580px;top:191px;">Активный</div>
<div style="left:431px;top:209px;width:145px;height:19px;background:linear-gradient(90deg,#d7d7d7,#cdcdcd);border-bottom:1px solid #ececec;"></div>
<div style="left:576px;top:209px;width:189px;height:19px;background:#f5f5f5;border-bottom:1px solid #fbfbfb;"></div>
<div class="t" style="left:448px;top:210px;">Предустановка</div>
<div class="t" style="left:580px;top:210px;">Не предустановка</div>
<div style="left:431px;top:228px;width:334px;height:19px;background:#547aa8;border-bottom:1px solid #e6eaf0;"></div>
<svg style="left:434px;top:232px" width="9" height="9"><rect x="0" y="0" width="9" height="9" fill="#9c9c9c"/><rect x="0" y="0" width="8" height="8" fill="#fafafa"/><rect x="1" y="1" width="7" height="7" fill="#ececec"/><rect x="2" y="4" width="5" height="1" fill="#2a3a9c"/></svg>
<div class="t" style="left:449px;top:229px;color:#fff;font-weight:bold;letter-spacing:.25px;">Печать</div>
<div style="left:431px;top:247px;width:145px;height:19px;background:linear-gradient(90deg,#d7d7d7,#cdcdcd);border-bottom:1px solid #ececec;"></div>
<div style="left:576px;top:247px;width:189px;height:19px;background:#f5f5f5;border-bottom:1px solid #fbfbfb;"></div>
<div class="t" style="left:448px;top:248px;">Слиповый</div>
<div class="cb" style="left:580px;top:249px;width:13px;height:13px;"></div>
<div style="left:431px;top:266px;width:334px;height:19px;background:#547aa8;border-bottom:1px solid #e6eaf0;"></div>
<svg style="left:434px;top:270px" width="9" height="9"><rect x="0" y="0" width="9" height="9" fill="#9c9c9c"/><rect x="0" y="0" width="8" height="8" fill="#fafafa"/><rect x="1" y="1" width="7" height="7" fill="#ececec"/><rect x="2" y="4" width="5" height="1" fill="#2a3a9c"/></svg>
<div class="t" style="left:449px;top:267px;color:#fff;font-weight:bold;letter-spacing:.25px;">Ограничения</div>
<div style="left:431px;top:285px;width:145px;height:19px;background:linear-gradient(90deg,#d7d7d7,#cdcdcd);border-bottom:1px solid #ececec;"></div>
<div style="left:576px;top:285px;width:189px;height:19px;background:#f5f5f5;border-bottom:1px solid #fbfbfb;"></div>
<div class="t" style="left:450px;top:286px;color:#8c8c8c;font-style:italic;">Версия макета</div>
<div class="t" style="left:580px;top:286px;">2</div>
<div style="left:431px;top:304px;width:145px;height:19px;background:linear-gradient(90deg,#d7d7d7,#cdcdcd);border-bottom:1px solid #ececec;"></div>
<div style="left:576px;top:304px;width:189px;height:19px;background:#f5f5f5;border-bottom:1px solid #fbfbfb;"></div>
<div class="t" style="left:448px;top:305px;">Право доступа</div>
<div style="left:577px;top:76px;width:189px;height:19px;border:1px dotted #000;"></div>
<div style="left:748px;top:78px;width:15px;height:14px;border:1px solid #3c7fb1;border-radius:3px;background:linear-gradient(#eaf6fd 0%,#d9f0fc 48%,#bee6fd 52%,#a7d9f5 100%);box-shadow:inset 0 0 0 1px #fafdfe;"></div>
<div style="left:751.2px;top:84px;width:1.6px;height:1.5px;background:#222;"></div>
<div style="left:754.2px;top:84px;width:1.6px;height:1.5px;background:#222;"></div>
<div style="left:757.2px;top:84px;width:1.6px;height:1.5px;background:#222;"></div>
<div class="rb" style="left:437px;top:74px;width:331px;height:22px;"></div>
<div style="left:430px;top:740px;width:336px;height:3px;background:#ffffe1;"></div>
<div style="left:44px;top:321px;width:728px;height:419px;border:1px solid #000;border-radius:7px 7px 1px 1px;background:linear-gradient(180deg,#97b2d1 0px,#b9d1ea 30px,#b9d1ea 100%);box-shadow:inset -1px -1px 0 0 #35c6e8, inset 1px 1px 0 0 rgba(255,255,255,.7);"></div>
<svg style="left:54px;top:331px" width="16" height="16" viewBox="0 0 16 16"><rect x="0" y="0" width="12.8" height="15.6" fill="#9fa7a9"/> <rect x="1" y="1" width="11" height="13.8" fill="#d9f6f8"/> <rect x="3" y="4" width="3" height="1" fill="#8a8a8a"/><rect x="7" y="4" width="2" height="1" fill="#8a8a8a"/> <rect x="3" y="6" width="3" height="1" fill="#9a9a9a"/> <rect x="2.5" y="7.5" width="1" height="5" fill="#b8c4c8"/> <path d="M5 14.2 H14.6 L15 16 H4.6Z" fill="#2a8ce4"/> <path d="M5.6 7.4 H14.2 Q16 7.4 16 9.4 V11.4 Q16 13.4 14.2 13.4 H5.6 Q3.8 13.4 3.8 11.4 V9.4 Q3.8 7.4 5.6 7.4Z" fill="#1c6cd4"/> <path d="M4 10.2 Q10 11.6 15.8 10.2 V11 Q10 12.4 4 11Z" fill="#56a2f0"/> <path d="M5.6 7.7 H14.2 Q15.4 7.7 15.6 9 Q10 9.9 4.2 9 Q4.4 7.7 5.6 7.7Z" fill="#3a8ae6"/> <path d="M7.6 4 H12 L12.4 8 L9.8 9.8 L7.2 8Z" fill="#f6f9fc" stroke="#8fa0b4" stroke-width=".6"/> <path d="M8.2 5.4 L11.4 5.4 L9.8 8.2Z" fill="#b9c8d8"/> <path d="M5 12.5 Q9.8 13.6 14.6 12.5 V14.3 H5Z" fill="#070c18"/></svg>
<div class="tt" style="left:74px;top:332px;">Дизайнер макетов: "Результат авторизации"</div>
<div class="cap" style="left:665px;top:331px;width:30px;height:17px;background:linear-gradient(#c7d9ec 0%,#b4cbe4 48%,#9dbad9 52%,#b5cfe8 100%);border-color:#5d6f85;box-shadow:inset 0 0 0 1px rgba(255,255,255,.5);"><svg style="left:-1px;top:-1px" width="30" height="17"><rect x="10" y="8.5" width="10.5" height="3.6" rx="1" fill="#f6f7f9" stroke="#4a5565"/></svg></div>
<div class="cap" style="left:698px;top:331px;width:30px;height:17px;background:linear-gradient(#c7d9ec 0%,#b4cbe4 48%,#9dbad9 52%,#b5cfe8 100%);border-color:#5d6f85;box-shadow:inset 0 0 0 1px rgba(255,255,255,.5);"><svg style="left:-1px;top:-1px" width="30" height="17"><rect x="10.5" y="4.5" width="10" height="7.6" rx="1" fill="#f6f7f9" stroke="#4a5565"/><rect x="13.3" y="7" width="4.4" height="2.4" fill="#8fa3bd" stroke="#4a5565" stroke-width=".8"/></svg></div>
<div class="cap" style="left:731px;top:331px;width:30px;height:17px;background:linear-gradient(#e3a99e 0%,#d4796a 48%,#c2391f 52%,#d2755c 100%);border-color:#5a2a2e;box-shadow:inset 0 0 0 1px rgba(255,255,255,.45);"><svg style="left:-1px;top:-1px" width="30" height="17"><path d="M10 4.5 L13.3 4.5 L15.2 6.6 L17.1 4.5 L20.5 4.5 L17.2 8.2 L20.5 12 L17.1 12 L15.2 9.9 L13.3 12 L10 12 L13.3 8.2 Z" fill="#f8f8f8" stroke="#454552" stroke-width="1" stroke-linejoin="round"/></svg></div>
<div style="left:52px;top:351px;width:712px;height:381px;background:#f0f0f0;"></div>
<div style="left:52px;top:378px;width:371px;height:1px;background:#a0a0a0;"></div>
<div style="left:57px;top:354px;width:1px;height:22px;background:#a0a0a0;"></div>
<div style="left:58px;top:354px;width:1px;height:22px;background:#fff;"></div>
<div style="left:146px;top:351px;width:1px;height:27px;background:#a0a0a0;"></div>
<div style="left:147px;top:351px;width:1px;height:27px;background:#fff;"></div>
<div style="left:152px;top:354px;width:1px;height:22px;background:#a0a0a0;"></div>
<div style="left:153px;top:354px;width:1px;height:22px;background:#fff;"></div>
<div style="left:239px;top:351px;width:1px;height:27px;background:#a0a0a0;"></div>
<div style="left:240px;top:351px;width:1px;height:27px;background:#fff;"></div>
<div style="left:245px;top:354px;width:1px;height:22px;background:#a0a0a0;"></div>
<div style="left:246px;top:354px;width:1px;height:22px;background:#fff;"></div>
<div style="left:331px;top:351px;width:1px;height:27px;background:#a0a0a0;"></div>
<div style="left:332px;top:351px;width:1px;height:27px;background:#fff;"></div>
<div style="left:337px;top:354px;width:1px;height:22px;background:#a0a0a0;"></div>
<div style="left:338px;top:354px;width:1px;height:22px;background:#fff;"></div>
<div style="left:422px;top:351px;width:1px;height:27px;background:#a0a0a0;"></div>
<div style="left:423px;top:351px;width:1px;height:27px;background:#fff;"></div>
<svg style="left:70px;top:356px" width="18" height="17"><path d="M.5 .5 H6 L8.5 3 V11.5 H.5Z" fill="#fff" stroke="#222"/><rect x="1" y="2" width="3.5" height="9" fill="#fbfbd4"/><path d="M5.8 .4 L8.7 3.3 H5.8Z" fill="#000"/><path d="M5.5 6.5 H9.3 L10.3 8 H16.5 V16.5 H5.5Z" fill="#e4d03c" stroke="#2c2600"/><rect x="6.2" y="8.7" width="9.6" height="1.6" fill="#fff58a"/><rect x="6.2" y="14.6" width="9.6" height="1.2" fill="#b49c1c"/><path d="M16.6 6.5 V4.6 Q16.6 2.7 14.4 2.7 H13.5" fill="none" stroke="#1428c0" stroke-width="1.7"/><path d="M13.8 0 L10.6 2.7 L13.8 5.4Z" fill="#1428c0"/></svg>
<svg style="left:95px;top:356px" width="18" height="17"><path d="M.5 .5 H6 L8.5 3 V11.5 H.5Z" fill="#fff" stroke="#222"/><rect x="1" y="2" width="3.5" height="9" fill="#fbfbd4"/><path d="M5.8 .4 L8.7 3.3 H5.8Z" fill="#000"/><path d="M5.5 6.5 H9.3 L10.3 8 H16.5 V16.5 H5.5Z" fill="#e4d03c" stroke="#2c2600"/><rect x="6.2" y="8.7" width="9.6" height="1.6" fill="#fff58a"/><rect x="6.2" y="14.6" width="9.6" height="1.2" fill="#b49c1c"/><path d="M11.2 5.6 V4.4 Q11.2 2.6 13.2 2.6 H14.4" fill="none" stroke="#1428c0" stroke-width="1.7"/><path d="M14.2 0 L17.6 2.8 L14.2 5.4Z" fill="#1428c0"/></svg>
<svg style="left:121px;top:357px" width="18" height="17"><path d="M.5 .5 H7.5 L11 4 V14.5 H.5Z" fill="#fff" stroke="#111"/><path d="M7.3 .4 V4.2 H11.1" fill="none" stroke="#111"/><circle cx="9.6" cy="8.6" r="3.3" fill="#b8f4ff" stroke="#111"/><circle cx="8.8" cy="7.8" r="1.1" fill="#fff"/><path d="M12 11 L15.5 14.8" stroke="#111" stroke-width="2"/></svg>
<div style="left:162px;top:354px;width:25px;height:22px;border:1px solid #767676;border-radius:3px;background:linear-gradient(#d9d9d9,#e6e6e6 50%,#f0f0f0);box-shadow:inset 1px 1px 1px rgba(0,0,0,.12);"></div>
<svg style="left:168px;top:358px" width="14" height="15"><path d="M.5 1.2 L3.4 10.2 L5.9 8 L11.3 13.4 L13 11.6 L8 6.2 L11 4.6 Z" fill="#fff" stroke="#000" stroke-width="1.1" stroke-linejoin="miter"/></svg>
<svg style="left:191px;top:356px" width="17" height="18"><rect x=".5" y=".5" width="15" height="16" fill="#fff" stroke="#000"/><rect x="15.6" y="1" width=".9" height="16.5" fill="#222"/><rect x="1" y="16.6" width="15.5" height=".9" fill="#222"/><rect x="3" y="3" width="3" height="1" fill="#0000a0"/><rect x="3" y="6" width="10" height="1" fill="#0000a0"/><rect x="3" y="8" width="10" height="1" fill="#0000a0"/><rect x="3" y="10" width="10" height="1" fill="#0000a0"/><rect x="3" y="12" width="10" height="1" fill="#0000a0"/><rect x="3" y="14" width="10" height="1" fill="#0000a0"/></svg>
<svg style="left:215px;top:358px" width="18" height="13"><rect x=".5" y="1.5" width="16" height="10" fill="#fff" stroke="#a0a0a0"/><rect x="3" y="0" width="8" height="3" fill="#00008c"/></svg>
<svg style="left:262px;top:359px" width="13" height="12"><rect x="0" y="0" width="12" height="1" fill="#969696"/><rect x="0" y="2" width="8" height="1" fill="#969696"/><rect x="0" y="4" width="12" height="1" fill="#969696"/><rect x="0" y="6" width="7" height="1" fill="#969696"/><rect x="0" y="8" width="12" height="1" fill="#969696"/><rect x="0" y="10" width="8" height="1" fill="#969696"/></svg>
<svg style="left:286px;top:359px" width="13" height="12"><rect x="0" y="0" width="12" height="1" fill="#969696"/><rect x="2" y="2" width="8" height="1" fill="#969696"/><rect x="0" y="4" width="12" height="1" fill="#969696"/><rect x="2" y="6" width="7" height="1" fill="#969696"/><rect x="0" y="8" width="12" height="1" fill="#969696"/><rect x="2" y="10" width="8" height="1" fill="#969696"/></svg>
<svg style="left:311px;top:359px" width="13" height="12"><rect x="0" y="0" width="12" height="1" fill="#969696"/><rect x="4" y="2" width="8" height="1" fill="#969696"/><rect x="0" y="4" width="12" height="1" fill="#969696"/><rect x="5" y="6" width="7" height="1" fill="#969696"/><rect x="0" y="8" width="12" height="1" fill="#969696"/><rect x="4" y="10" width="8" height="1" fill="#969696"/></svg>
<div style="left:344px;top:355px;width:72px;height:19px;background:#fff;border:1px solid #8a8a8a;border-right-color:#c0c0c0;border-bottom-color:#c0c0c0;"></div>
<div style="left:398px;top:356px;width:17px;height:17px;background:#f0f0f0;"><svg width="17" height="17"><path d="M5 7 H12 L8.5 10.5Z" fill="#000"/></svg></div>
<div class="t" style="left:347px;top:356px;">100</div>
<div style="left:52px;top:379px;width:457px;height:275px;background:#f0f0f0;border-top:2px solid #696969;border-left:2px solid #a0a0a0;border-bottom:1px solid #fff;"></div>
<div style="left:82px;top:381px;width:401px;height:271px;background:#fff;"></div>
<div style="left:82px;top:381px;width:395px;height:271px;background-image:radial-gradient(circle at .5px .5px,#000 0 .6px,transparent .7px);background-size:10px 19px;background-position:0 0;"></div>
<div style="left:82px;top:438px;width:400px;height:57px;background:#000;"></div>
<div style="left:84px;top:440px;width:396px;height:15px;background:#b1b18f;"></div>
<div style="left:84px;top:457px;width:396px;height:17px;background:#c5c5a5;"></div>
<div style="left:84px;top:474px;width:396px;height:19px;background:#b1b18f;"></div>
<div style="left:84px;top:476px;width:396px;height:1px;background-image:radial-gradient(circle at .5px .5px,#000 0 .6px,transparent .7px);background-size:10px 19px;background-position:-2px 0;"></div>
<div style="left:84px;top:457px;width:396px;height:1px;background-image:radial-gradient(circle at .5px .5px,#000 0 .6px,transparent .7px);background-size:10px 19px;background-position:-2px 0;"></div>
<div class="t" style="left:84px;top:440px;font:16.5px 'Liberation Mono',monospace;color:#181818;line-height:18px;height:18px;transform:scaleY(.82);transform-origin:0 13.5px;">Authorization Result</div>
<div class="t" style="left:84px;top:458px;font:16.5px 'Liberation Mono',monospace;color:#181818;line-height:18px;height:18px;transform:scaleY(.82);transform-origin:0 13.5px;">[SlipToPrint]</div>
<div style="left:491px;top:381px;width:17px;height:272px;background:linear-gradient(90deg,#eeeeee,#e5e5e5 25%,#e8e8e8 70%,#f2f2f2);"></div>
<svg style="left:491px;top:381px" width="17" height="17"><path d="M5 10 L8.5 6.5 L12 10Z" fill="#404040"/></svg>
<svg style="left:491px;top:636px" width="17" height="17"><path d="M5 7 L8.5 10.5 L12 7Z" fill="#404040"/></svg>
<div style="left:492px;top:400px;width:15px;height:82px;border:1px solid #979797;border-radius:2px;background:linear-gradient(90deg,#f6f6f6 0%,#ececec 45%,#d6d6d6 55%,#dedede 100%);"></div>
<div style="left:496px;top:437px;width:7px;height:1px;background:#5a5a5a;box-shadow:0 1px 0 #fff;"></div>
<div style="left:496px;top:440px;width:7px;height:1px;background:#5a5a5a;box-shadow:0 1px 0 #fff;"></div>
<div style="left:496px;top:443px;width:7px;height:1px;background:#5a5a5a;box-shadow:0 1px 0 #fff;"></div>
<svg style="left:60px;top:370px" width="40" height="40"><path d="M21 6 L31.5 28" stroke="#f00" stroke-width="1" fill="none"/></svg>
<div class="t" style="left:96px;top:391px;color:#f00;font:12px 'DejaVu Sans','Liberation Sans',sans-serif;line-height:16px;letter-spacing:.35px;">Загрузить макет</div>
<div class="rb" style="left:64px;top:352px;width:27px;height:24px;"></div>
<div style="left:515px;top:379px;width:249px;height:275px;background:#fff;"></div>
<div style="left:515px;top:400px;width:249px;height:1px;background:#000;"></div>
<div style="left:520px;top:381px;width:60px;height:20px;background:#fff;border:1px solid #000;border-bottom:none;"></div>
<div class="t" style="left:525px;top:384px;">Свойства</div>
<div class="t" style="left:584px;top:384px;">Помощник</div>
<div style="left:515px;top:403px;width:249px;height:251px;background:#fff;border:1px solid #8e9bb0;"></div>
<div style="left:516px;top:404px;width:231px;height:250px;background:#fff;border-left:1px solid #d0d4da;border-top:1px solid #d0d4da;"></div>
<div style="left:517px;top:405px;width:230px;height:18px;background:#f0f0f0;"></div>
<svg style="left:520px;top:409px" width="9" height="9" viewBox="0 0 9 9"><rect x=".5" y=".5" width="8" height="8" rx=".6" fill="#f8f8f8" stroke="#848484"/> <rect x="2" y="4" width="5" height="1" fill="#2a3f9c"/></svg>
<div class="t" style="left:534px;top:406px;color:#676767;font-weight:bold;font-size:11px;letter-spacing:.5px;">Данные</div>
<div style="left:517px;top:423px;width:230px;height:18px;background:#fff;border-bottom:1px solid #f0f0f0;"></div>
<div style="left:676px;top:423px;width:1px;height:18px;background:#f0f0f0;"></div>
<div class="t" style="left:534px;top:424px;">Категория</div>
<div class="t" style="left:680px;top:424px;">[Нет]</div>
<div style="left:517px;top:441px;width:230px;height:18px;background:#f0f0f0;border-bottom:1px solid #f0f0f0;"></div>
<div style="left:676px;top:441px;width:1px;height:18px;background:#f0f0f0;"></div>
<div class="t" style="left:534px;top:442px;">Источник данных</div>
<div style="left:677px;top:441px;width:70px;height:18px;background:#fff;border:1px dotted #000;"></div>
<div class="t" style="left:679px;top:442px;width:49px;overflow:hidden;">Authorizat</div>
<div style="left:729px;top:444px;width:14px;height:11px;border:1px solid #707070;border-radius:3px;background:linear-gradient(#f2f2f2,#ddd);box-shadow:inset 0 0 0 1px #fff;"></div>
<div style="left:733px;top:449px;width:7px;height:1px;background:repeating-linear-gradient(90deg,#333 0 1px,transparent 1px 3px);"></div>
<div style="left:517px;top:459px;width:230px;height:18px;background:#fff;border-bottom:1px solid #f0f0f0;"></div>
<div style="left:676px;top:459px;width:1px;height:18px;background:#f0f0f0;"></div>
<div class="t" style="left:534px;top:460px;">Фильтр</div>
<div class="t" style="left:680px;top:460px;">[Нет]</div>
<div style="left:517px;top:477px;width:230px;height:18px;background:#fff;border-bottom:1px solid #f0f0f0;"></div>
<div style="left:676px;top:477px;width:1px;height:18px;background:#f0f0f0;"></div>
<div class="t" style="left:534px;top:478px;">Вычисляемые поля</div>
<div class="t" style="left:680px;top:478px;">[Нет]</div>
<div style="left:517px;top:495px;width:230px;height:18px;background:#fff;border-bottom:1px solid #f0f0f0;"></div>
<div style="left:676px;top:495px;width:1px;height:18px;background:#f0f0f0;"></div>
<div class="t" style="left:534px;top:496px;">Группировка</div>
<div class="t" style="left:680px;top:496px;">[Нет]</div>
<div style="left:517px;top:513px;width:230px;height:18px;background:#fff;border-bottom:1px solid #f0f0f0;"></div>
<div style="left:676px;top:513px;width:1px;height:18px;background:#f0f0f0;"></div>
<div class="t" style="left:534px;top:514px;">Порядок сортировки</div>
<div class="t" style="left:680px;top:514px;">[Нет]</div>
<div style="left:517px;top:531px;width:230px;height:18px;background:#f0f0f0;"></div>
<svg style="left:520px;top:535px" width="9" height="9" viewBox="0 0 9 9"><rect x=".5" y=".5" width="8" height="8" rx=".6" fill="#f8f8f8" stroke="#848484"/> <rect x="2" y="4" width="5" height="1" fill="#2a3f9c"/></svg>
<div class="t" style="left:534px;top:532px;color:#676767;font-weight:bold;font-size:11px;letter-spacing:.2px;">Внешний вид</div>
<div style="left:517px;top:549px;width:230px;height:18px;background:#fff;border-bottom:1px solid #f0f0f0;"></div>
<div style="left:517px;top:549px;width:159px;height:18px;background:#f0f0f0;"></div>
<div style="left:676px;top:549px;width:1px;height:18px;background:#f0f0f0;"></div>
<svg style="left:520px;top:553px" width="9" height="9" viewBox="0 0 9 9"><rect x=".5" y=".5" width="8" height="8" rx=".6" fill="#f8f8f8" stroke="#848484"/> <rect x="2" y="4" width="5" height="1" fill="#2a3f9c"/></svg>
<div class="t" style="left:537px;top:550px;font-style:italic;">Тело</div>
<div class="t" style="left:680px;top:550px;">Size = 2</div>
<div style="left:517px;top:567px;width:230px;height:18px;background:#fff;border-bottom:1px solid #f0f0f0;"></div>
<div style="left:676px;top:567px;width:1px;height:18px;background:#f0f0f0;"></div>
<div class="t" style="left:547px;top:568px;">Цветной</div>
<div class="cb" style="left:681px;top:570px;width:13px;height:13px;"></div>
<div style="left:517px;top:585px;width:230px;height:18px;background:#fff;border-bottom:1px solid #f0f0f0;"></div>
<div style="left:676px;top:585px;width:1px;height:18px;background:#f0f0f0;"></div>
<div class="t" style="left:547px;top:586px;">Двойная высота</div>
<div class="cb" style="left:681px;top:588px;width:13px;height:13px;"></div>
<div style="left:517px;top:603px;width:230px;height:18px;background:#fff;border-bottom:1px solid #f0f0f0;"></div>
<div style="left:676px;top:603px;width:1px;height:18px;background:#f0f0f0;"></div>
<div class="t" style="left:547px;top:604px;">Двойная ширина</div>
<div class="cb" style="left:681px;top:606px;width:13px;height:13px;"></div>
<div style="left:517px;top:621px;width:230px;height:18px;background:#fff;border-bottom:1px solid #f0f0f0;"></div>
<div style="left:676px;top:621px;width:1px;height:18px;background:#f0f0f0;"></div>
<div class="t" style="left:547px;top:622px;">Прятать пустые строки</div>
<div class="cb" style="left:681px;top:624px;width:13px;height:13px;"></div>
<div style="left:517px;top:639px;width:230px;height:15px;background:#fff;border-bottom:1px solid #f0f0f0;"></div>
<div style="left:676px;top:639px;width:1px;height:15px;background:#f0f0f0;"></div>
<div class="t" style="left:547px;top:640px;">Размер</div>
<div class="t" style="left:680px;top:640px;">2</div>
<div style="left:747px;top:404px;width:17px;height:249px;background:linear-gradient(90deg,#eeeeee,#e5e5e5 25%,#e8e8e8 70%,#f2f2f2);"></div>
<svg style="left:747px;top:404px" width="17" height="17"><path d="M5 10 L8.5 6.5 L12 10Z" fill="#404040"/></svg>
<svg style="left:747px;top:636px" width="17" height="17"><path d="M5 7 L8.5 10.5 L12 7Z" fill="#404040"/></svg>
<div style="left:748px;top:422px;width:15px;height:86px;border:1px solid #979797;border-radius:2px;background:linear-gradient(90deg,#f6f6f6 0%,#ececec 45%,#d6d6d6 55%,#dedede 100%);"></div>
<div style="left:752px;top:461px;width:7px;height:1px;background:#5a5a5a;box-shadow:0 1px 0 #fff;"></div>
<div style="left:752px;top:464px;width:7px;height:1px;background:#5a5a5a;box-shadow:0 1px 0 #fff;"></div>
<div style="left:752px;top:467px;width:7px;height:1px;background:#5a5a5a;box-shadow:0 1px 0 #fff;"></div>
<div style="left:515px;top:653px;width:249px;height:1px;background:#8e9bb0;"></div>
<div style="left:52px;top:654px;width:712px;height:21px;background:#ffffe8;"></div>
<div style="left:52px;top:654px;width:712px;height:1px;background:#858585;"></div>
<svg style="left:52px;top:653px" width="70" height="20"><path d="M5 .8 L13 17.5 H51 L57 .8Z" fill="#f6f6f2" stroke="none"/><path d="M5 1.5 L13 17.5 H51 L57 1.5" fill="none" stroke="#808080"/></svg>
<div class="t" style="left:67px;top:655px;">Лист 1</div>
<div class="cb" style="left:66px;top:689px;width:13px;height:13px;"></div>
<div class="t" style="left:83px;top:687px;">Системные имена</div>
<div class="btn" style="left:598px;top:682px;width:73px;height:22px;">OK</div>
<div class="btn" style="left:680px;top:682px;width:73px;height:22px;">Отмена</div>
<div class="rb" style="left:596px;top:676px;width:82px;height:32px;"></div>
<div style="left:52px;top:713px;width:712px;height:19px;background:#f0eded;border-top:1px solid #9a9a9a;"></div>
<div class="t" style="left:53px;top:716px;font-size:12px;letter-spacing:-.3px;color:#1a0a28;">Изменен</div>
<div class="t" style="left:116px;top:716px;font-size:12px;letter-spacing:-1px;color:#1a0a28;">39x0</div>
<div style="left:101px;top:715px;width:1px;height:16px;background:#c8c8c8;"></div>
<div style="left:151px;top:715px;width:1px;height:16px;background:#c8c8c8;"></div>
<div style="left:201px;top:715px;width:1px;height:16px;background:#c8c8c8;"></div>
<div style="left:761px;top:728px;width:2px;height:2px;background:#c0c0c0;box-shadow:1px 1px 0 #fff;"></div>
<div style="left:758px;top:728px;width:2px;height:2px;background:#c0c0c0;box-shadow:1px 1px 0 #fff;"></div>
<div style="left:761px;top:725px;width:2px;height:2px;background:#c0c0c0;box-shadow:1px 1px 0 #fff;"></div>
<div style="left:755px;top:728px;width:2px;height:2px;background:#c0c0c0;box-shadow:1px 1px 0 #fff;"></div>
<div style="left:758px;top:725px;width:2px;height:2px;background:#c0c0c0;box-shadow:1px 1px 0 #fff;"></div>
<div style="left:761px;top:722px;width:2px;height:2px;background:#c0c0c0;box-shadow:1px 1px 0 #fff;"></div>
</body></html>
